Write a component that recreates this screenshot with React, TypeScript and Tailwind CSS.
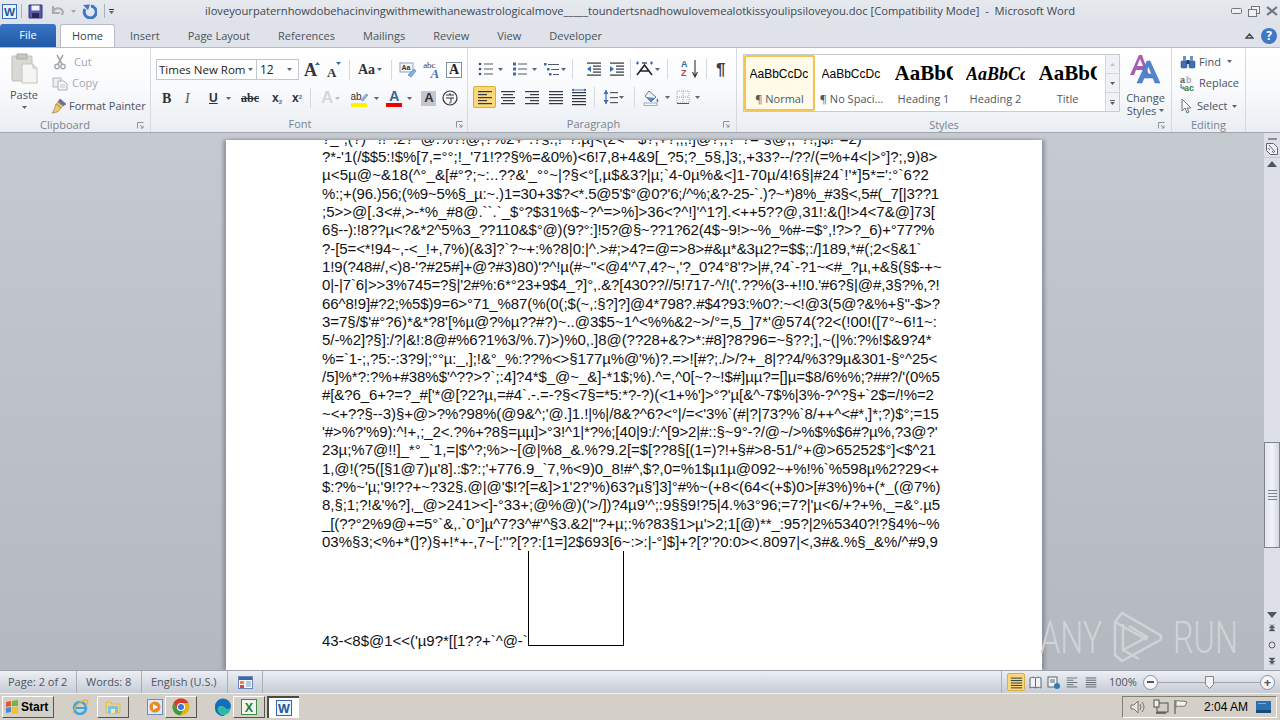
import React from "react";

type P = { className?: string };

const LINES = [
  "?*-'1(/$$5:!$%[7,=°°;!_'71!??§%=&0%)<6!7,8+4&9[_?5;?_5§,]3;,+33?--/??/(=%+4<|>°]?;,9)8>",
  "µ<5µ@~&18(^°_&[#°?;~:..??&'_°°~|?§<°[,µ$&3?|µ;`4-0µ%&<]1-70µ/4!6§|#24`!'*]5*=':°`6?2",
  "%:;+(96.)56;(%9~5%§_µ:~.)1=30+3$?<*.5@5'$°@0?'6;/^%;&?-25-`.)?~*)8%_#3§<,5#(_7[|3??1",
  ";5>>@[.3<#,>-*%_#8@.``.`_$°?$31%$~?^=>%]>36<?^!]'^1?].<++5??@,31!:&(]!>4<7&@]73[",
  "6§--):!8??µ<?&*2^5%3_??110&$°@)(9?°:]!5?@§~??1?62(4$~9!>~%_%#-=$°,!?>?_6)+°77?%",
  "?-[5=<*!94~,-<_!+,7%)(&3]?`?~+:%?8|0:|^.>#;>4?=@=>8>#&µ*&3µ2?=$$;:/]189,*#(;2<§&1`",
  "1!9(?48#/,<)8-'?#25#]+@?#3)80)'?^!µ(#~''<@4'^7,4?~,'?_0?4°8'?>|#,?4`-?1~<#_?µ,+&§(§$-+~",
  "0|-|7`6|>>3%745=?§|'2#%:6*°23+9$4_?]°,.&?[430??//5!717-^/!('.??%(3-+!!0.'#6?§|@#,3§?%,?!",
  "66^8!9]#?2;%5$)9=6>°71_%87(%(0(;$(~,:§?]?]@4*798?.#$4?93:%0?:~<!@3(5@?&%+§''-$>?",
  "3=7§/$'#°?6)*&*?8'[%µ@?%µ??#?)~..@3$5~1^<%%&2~>/°=,5_]7*'@574(?2<(!00!([7°~6!1~:",
  "5/-%2]?§]:/?|&!:8@#%6?1%3/%.7)>)%0,.]8@(??28+&?>*:#8]?8?96=~§??;],~(|%:?%!$&9?4*",
  "%=`1-;,?5:-:3?9|;°°µ:_,];!&°_%:??%<>§177µ%@'%)?.=>![#?;./>/?+_8|??4/%3?9µ&301-§°^25<",
  "/5]%*?:?%+#38%$'^??>?`;:4]?4*$_@~_&]-*1$;%).^=,^0[~?~!$#]µµ?=[]µ=$8/6%%;?##?/'(0%5",
  "#[&?6_6+?=?_#['*@[?2?µ,=#4`.-.=-?§<7§=*5:*?-?)(<1+%']>°?'µ[&^-7$%|3%-?^?§+`2$=/!%=2",
  "~<+??§--3)§+@>?%?98%(@9&^;'@.]1.!|%|/8&?^6?<°|/=<'3%`(#|?|73?%`8/++^<#*,]*;?)$°;=15",
  "'#>%?'%9):^!+,;_2<.?%+?8§=µµ]>°3!^1|*?%;[40|9:/:^[9>2|#::§~9°-?/@~/>%$%$6#?µ%,?3@?'",
  "23µ;%7@!!]_*°_`1,=|$^?;%>~[@|%8_&.%?9.2[=$[??8§[(1=)?!+§#>8-51/°+@>65252$°]<$^21",
  "1,@!(?5([§1@7)µ'8].:$?:;'+776.9_`7,%<9)0_8!#^,$?,0=%1$µ1µ@092~+%!%`%598µ%2?29<+",
  "$:?%~'µ;'9!??+~?32§.@|@'$!?[=&]>1'2?'%)63?µ§']3]°#%~(+8<(64<(+$)0>[#3%)%+(*_(@7%)",
  "8,§;1;?!&'%?],_@>241><]-°33+;@%@)('>/])?4µ9'^;:9§§9!?5|4.%3°96;=7?|'µ<6/+?+%,_=&°.µ5",
  "_[(??°2%9@+=5°`&,.`0°]µ^7?3^#'^§3.&2|''?+µ;:%?83§1>µ'>2;1[@)**_:95?|2%5340?!?§4%~%",
  "03%§3;<%+*(]?)§+!*+-,7~[:''?[??:[1=]2$693[6~:>:|-°]$]+?[?'?0:0><.8097|<,3#&.%§_&%/^#9,9",
];
// px to add to each line so it ends where the reference line ends
const DELTAS = [-2, 10, -16, 0, -13, -7, -8, -9, -9, -2, -4, -9, -3, -7, -6, -8, -3, -6, -1, -4, -6, 1];

const Caret = ({ className = "" }: P) => (
  <svg viewBox="0 0 5 3" className={`w-[5px] h-[3px] shrink-0 ${className}`}><path d="M0 0h5L2.5 3z" fill="#5c6470" /></svg>
);
const Sep = ({ className = "" }: P) => <div className={`w-px h-[20px] bg-[#d5d9df] shrink-0 ${className}`} />;

const WordLogo = ({ className = "" }: P) => (
  <svg viewBox="0 0 16 16" className={className}>
    <rect x="0.5" y="0.5" width="15" height="15" fill="#eef3fb" stroke="#2f66ad" />
    <text x="8" y="13" textAnchor="middle" fontSize="12.5" fontWeight="700" fontFamily="Liberation Sans" fill="#22589f">W</text>
  </svg>
);
const Lines = ({ className = "", kind = "l" }: P & { kind?: string }) => {
  const rows = [2, 5, 8, 11, 14];
  const xy: Record<string, [number, number][]> = {
    l: [[1, 14], [1, 9], [1, 14], [1, 9], [1, 14]],
    c: [[1, 14], [3, 10], [1, 14], [3, 10], [1, 14]],
    r: [[1, 14], [6, 9], [1, 14], [6, 9], [1, 14]],
    j: [[1, 14], [1, 14], [1, 14], [1, 14], [1, 14]],
  };
  return (
    <svg viewBox="0 0 16 16" className={`w-4 h-4 shrink-0 ${className}`}>
      {rows.map((y, i) => <rect key={y} x={xy[kind][i][0]} y={y} width={xy[kind][i][1]} height="1.2" fill="#333a45" />)}
    </svg>
  );
};
const Paste = () => (
  <svg viewBox="0 0 27 32" className="w-[27px] h-[32px]">
    <rect x="1" y="3" width="20" height="25" rx="1" fill="#d9d9d6" stroke="#bdbdb9" />
    <rect x="6" y="1" width="10" height="5" fill="#c5c5c1" stroke="#aaa" />
    <path d="M11 11h11l4 4v15H11z" fill="#f5f5f3" stroke="#c3c3c0" />
    <path d="M22 11v4h4" fill="#e5e5e2" stroke="#c3c3c0" />
  </svg>
);
const Cut = () => (
  <svg viewBox="0 0 14 16" className="w-[14px] h-[16px]">
    <path d="M4 1l5 9M10 1L5 10" stroke="#a5a8ad" strokeWidth="1.6" fill="none" />
    <circle cx="4" cy="12.5" r="2.2" fill="none" stroke="#a5a8ad" strokeWidth="1.4" />
    <circle cx="10" cy="12.5" r="2.2" fill="none" stroke="#a5a8ad" strokeWidth="1.4" />
  </svg>
);
const Copy = () => (
  <svg viewBox="0 0 16 14" className="w-4 h-[14px]">
    <rect x="1" y="1" width="8" height="9" fill="#eee" stroke="#b5b7ba" />
    <path d="M6 4h6l3 3v6H6z" fill="#f5f5f5" stroke="#aeb1b5" />
    <path d="M8 8h5M8 10h5" stroke="#c3c5c8" />
  </svg>
);
const Painter = () => (
  <svg viewBox="0 0 16 16" className="w-4 h-4">
    <path d="M9 1l6 5-3 2-5-4z" fill="#6a6fa8" stroke="#4a4d79" strokeWidth=".5" />
    <path d="M7 4l5 4-2 2-5-4z" fill="#e4c262" stroke="#a98628" strokeWidth=".5" />
    <path d="M5 6l5 4c-2 4-6 5-9 5 2-2 3-6 4-9z" fill="#e9c978" stroke="#8f7126" strokeWidth=".6" />
  </svg>
);
const Grow = ({ small = false }: { small?: boolean }) => (
  <div className="relative w-[16px] h-[18px] font-['Liberation_Serif',serif] font-bold text-[#30343b] leading-none">
    <span className={small ? "absolute left-[2px] bottom-0 text-[13px]" : "absolute left-0 bottom-0 text-[18px]"}>A</span>
    <svg viewBox="0 0 5 3" className="absolute right-0 top-[1px] w-[5px] h-[3px]"><path d={small ? "M0 0h5L2.5 3z" : "M0 3h5L2.5 0z"} fill="#3467a8" /></svg>
  </div>
);
const Bullets = ({ kind = "b" }: { kind?: string }) => (
  <svg viewBox="0 0 15 14" className="w-[15px] h-[14px] shrink-0">
    {[2, 7, 12].map((y) => (
      <g key={y}>
        {kind === "b" && <circle cx="2" cy={y} r="1.3" fill="#314f7f" />}
        {kind === "n" && <rect x="1" y={y - 1.5} width="3" height="3" fill="#3d6ab0" />}
        <rect x="6" y={y - 0.5} width="9" height="1" fill="#525a66" />
      </g>
    ))}
  </svg>
);
const Multi = () => (
  <svg viewBox="0 0 15 16" className="w-[15px] h-4 shrink-0">
    <rect x="0" y="2" width="2.5" height="2.5" fill="#3d6ab0" /><rect x="4" y="3" width="11" height="1" fill="#525a66" />
    <rect x="3" y="7" width="2.5" height="2.5" fill="#3d6ab0" /><rect x="7" y="8" width="8" height="1" fill="#525a66" />
    <rect x="5" y="12" width="2.5" height="2.5" fill="#3d6ab0" /><rect x="9" y="13" width="6" height="1" fill="#525a66" />
  </svg>
);
const Indent = ({ inc = false }: { inc?: boolean }) => (
  <svg viewBox="0 0 16 14" className="w-4 h-[14px] shrink-0">
    {[1, 4, 7, 10, 13].map((y, i) => <rect key={y} x={i === 0 || i === 4 ? 1 : 7} y={y - 0.5} width={i === 0 || i === 4 ? 14 : 8} height="1.2" fill="#2f343c" />)}
    <path d={inc ? "M1 4l4 3-4 3z" : "M5 4L1 7l4 3z"} fill="#3c6db2" />
  </svg>
);
const TextDir = () => (
  <svg viewBox="0 0 19 16" className="w-[19px] h-4 shrink-0">
    <path d="M2 14L9.5 4 17 14M5 10h9" stroke="#1c2129" strokeWidth="1.6" fill="none" />
    <path d="M1 2h3M15 2h3M2.5 .5v3M16.5 .5v3" stroke="#2a5fa8" strokeWidth="1.2" />
    <path d="M7 2h5" stroke="#1c2129" strokeWidth="1.2" />
  </svg>
);
const Sort = () => (
  <div className="relative w-[17px] h-[18px] shrink-0 font-['Liberation_Sans',sans-serif] font-bold text-[9px] leading-[9px]">
    <span className="block text-[#3568b0]">A</span>
    <span className="block text-[#b5463f]">Z</span>
    <svg viewBox="0 0 6 18" className="absolute right-0 top-0 w-[6px] h-[18px]"><path d="M3 0v16M.5 12L3 17l2.5-5" stroke="#333" strokeWidth="1.1" fill="none" /></svg>
  </div>
);
const Distributed = () => (
  <svg viewBox="0 0 16 18" className="w-4 h-[18px] shrink-0">
    <path d="M1 2h14M3 1L1 2l2 1M13 1l2 1-2 1" stroke="#3c6db2" fill="none" />
    {[5, 8, 11, 14, 17].map((y) => <rect key={y} x="1" y={y - 1} width="14" height="1.2" fill="#2f343c" />)}
  </svg>
);
const LineSpace = () => (
  <svg viewBox="0 0 15 16" className="w-[15px] h-4 shrink-0">
    <path d="M3 1v14" stroke="#3c6db2" strokeWidth="1.2" /><path d="M.5 5L3 1l2.5 4zM.5 11L3 15l2.5-4z" fill="#3c6db2" />
    {[3, 8, 13].map((y) => <rect key={y} x="7" y={y} width="8" height="1.2" fill="#525a66" />)}
  </svg>
);
const Fill = () => (
  <svg viewBox="0 0 17 17" className="w-[17px] h-[17px] shrink-0">
    <path d="M6 2l7 6-5 5-6-6z" fill="#eef1f5" stroke="#6b7888" />
    <path d="M3 8l9 1-4 4z" fill="#5588c4" />
    <path d="M14 9c1 2 2 3 1 4s-2-1-1-4z" fill="#4379bb" />
    <rect x="1" y="14" width="13" height="2.5" fill="#f2f4f7" stroke="#7b8fa8" strokeWidth=".7" />
  </svg>
);
const Borders = () => (
  <svg viewBox="0 0 14 14" className="w-[14px] h-[14px] shrink-0">
    <path d="M1 1h12v12H1zM7 1v12M1 7h12" fill="none" stroke="#9aa0a9" strokeDasharray="1 1" />
    <path d="M1 13.5h12" stroke="#555" />
  </svg>
);
const ChangeStyles = () => (
  <svg viewBox="0 0 36 30" className="w-[36px] h-[30px]">
    <path d="M2 21L11 1h3l7 20h-4l-1.5-5H8l-2 5zM9 12h6l-3-7z" fill="#a95db3" />
    <path d="M9 29L19 7h3l10 22h-5l-2-5h-9l-2 5zM17.500 20h6l-3-8z" fill="#4f86cf" stroke="#3a6cb0" strokeWidth=".5" />
  </svg>
);
const Find = () => (
  <svg viewBox="0 0 16 14" className="w-4 h-[14px]">
    <rect x="1" y="6" width="6" height="7" rx="1" fill="#3e70b3" stroke="#244c85" strokeWidth=".5" />
    <rect x="9" y="6" width="6" height="7" rx="1" fill="#3e70b3" stroke="#244c85" strokeWidth=".5" />
    <rect x="3" y="1" width="3" height="5" fill="#6b93c8" /><rect x="10" y="1" width="3" height="5" fill="#6b93c8" />
    <rect x="6.500" y="5" width="3" height="4" fill="#1f3f6e" />
  </svg>
);
const Replace = () => (
  <div className="relative w-[16px] h-[16px] font-['Liberation_Sans',sans-serif] font-bold text-[9px] leading-[8px]">
    <span className="absolute left-0 top-0 text-[#555]">a</span>
    <span className="absolute left-[6px] top-0 text-[#aaa]">b</span>
    <span className="absolute left-[4px] top-[8px] text-[#3d7a3a]">ac</span>
    <svg viewBox="0 0 5 7" className="absolute left-0 top-[8px] w-[5px] h-[7px]"><path d="M1 0v4h3M3 2.500L4.500 4 3 5.500" stroke="#3565a8" fill="none" /></svg>
  </div>
);
const Arrow = () => (
  <svg viewBox="0 0 12 16" className="w-3 h-4"><path d="M1 1v12l3-3 2 5 2-1-2-4h4z" fill="#f7f8fa" stroke="#6c7480" /></svg>
);
const Launcher = ({ className = "" }: P) => (
  <svg viewBox="0 0 7 7" className={`w-[7px] h-[7px] ${className}`}><path d="M.5 6.500v-6h6M3 3l3 3M6 3.500V6H3.500" fill="none" stroke="#8a929d" /></svg>
);

function GroupLabel({ text, className = "" }: { text: string; className?: string }) {
  return (
    <div className={`relative h-[16px] flex items-center justify-center text-[#7a838f] text-[11px] ${className}`}>
      {text}
    </div>
  );
}

function StyleItem({ label, active = false, clip, children }: { label: string; active?: boolean; clip: string; children: React.ReactNode }) {
  return (
    <div className={`w-[71px] h-[56px] shrink-0 flex flex-col items-center overflow-hidden ${active ? "border-2 border-[#f3c44f] bg-[#fffbe8] rounded-[2px]" : "border-2 border-transparent"}`}>
      <div className={`h-[34px] flex items-center overflow-hidden whitespace-nowrap text-black ${clip}`}>{children}</div>
      <div className="text-[11px] text-[#4e5763] leading-[16px] whitespace-nowrap">{label}</div>
    </div>
  );
}

function Ribbon() {
  return (
    <div className="h-[86px] shrink-0 flex bg-gradient-to-b from-[#ffffff] via-[#f9fafc] to-[#e9edf2] border-t border-[#b6bcc5] border-b border-b-[#a3a8b0] text-[#4a525d] text-[11px]">
      {/* Clipboard */}
      <div className="w-[151px] shrink-0 border-r border-[#d6dae0] flex flex-col">
        <div className="h-[69px] flex">
          <div className="w-[48px] flex flex-col items-center pt-[5px]">
            <Paste />
            <span className="mt-[3px] leading-[14px]">Paste</span>
            <Caret className="mt-[4px]" />
          </div>
          <div className="flex flex-col pt-[3px] pl-[3px]">
            <div className="h-[22px] flex items-center gap-[5px] pl-[2px] text-[#a3a8ae]"><Cut /><span className="ml-[2px]">Cut</span></div>
            <div className="h-[22px] flex items-center gap-[3px] pl-[1px] text-[#a3a8ae]"><Copy /><span className="ml-[1px]">Copy</span></div>
            <div className="h-[22px] mt-[1px] flex items-center gap-[2px] whitespace-nowrap"><Painter /><span>Format Painter</span></div>
          </div>
        </div>
        <div className="relative flex-1">
          <GroupLabel text="Clipboard" className="pr-[20px]" />
          <Launcher className="absolute right-[6px] top-[5px]" />
        </div>
      </div>
      {/* Font */}
      <div className="w-[317px] shrink-0 border-r border-[#d6dae0] flex flex-col">
        <div className="h-[69px] flex flex-col">
          <div className="flex items-center h-[21px] mt-[11px] pl-[5px]">
            <div className="w-[101px] h-[21px] border border-[#c3c8cf] bg-white flex items-center pl-[2px] text-[11.5px] text-[#222] overflow-hidden whitespace-nowrap">
              <span className="w-[86px] overflow-hidden">Times New Roma</span><Caret className="ml-[3px]" />
            </div>
            <div className="w-[42px] h-[21px] border border-l-0 border-[#c3c8cf] bg-white flex items-center pl-[3px] text-[12px] text-[#222]">
              <span className="w-[27px]">12</span><Caret />
            </div>
            <div className="ml-[5px]"><Grow /></div>
            <div className="ml-[5px]"><Grow small /></div>
            <Sep className="ml-[8px]" />
            <span className="ml-[8px] font-['Liberation_Serif',serif] font-bold text-[14px] text-[#333]">Aa</span>
            <Caret className="ml-[2px]" />
            <Sep className="ml-[9px]" />
            <svg viewBox="0 0 18 16" className="ml-[7px] w-[18px] h-4"><rect x="1" y="1" width="13" height="9" fill="#f4f6fa" stroke="#8ca0bc" /><path d="M9 13l6-6 2 2-5 6z" fill="#7fb0e0" stroke="#4a78b0" strokeWidth=".6" /><text x="7" y="8" textAnchor="middle" fontSize="7" fontWeight="700" fontFamily="Liberation Sans" fill="#333">Aa</text></svg>
            <div className="ml-[6px] relative w-[18px] h-[18px] font-['Liberation_Serif',serif] leading-none">
              <span className="absolute left-0 top-0 text-[9px] text-[#444]">abc</span>
              <span className="absolute right-[2px] -bottom-[1px] text-[13px] font-bold italic text-[#3d72bd]">A</span>
            </div>
            <div className="ml-[5px] w-[16px] h-[16px] border border-[#7f8fa3] bg-white flex items-center justify-center font-['Liberation_Serif',serif] font-bold text-[14px] text-[#222]">A</div>
          </div>
          <div className="flex items-center h-[22px] mt-[7px] pl-[11px] text-[#2d3239]">
            <span className="w-[11px] font-['Liberation_Serif',serif] font-bold text-[14px]">B</span>
            <span className="ml-[12px] w-[10px] font-['Liberation_Serif',serif] italic text-[14px] text-[#555]">I</span>
            <span className="ml-[14px] w-[10px] font-['Liberation_Sans',sans-serif] font-bold text-[12px] underline">U</span>
            <Caret className="ml-[7px]" />
            <span className="ml-[10px] font-['Liberation_Serif',serif] font-bold text-[12px] line-through">abc</span>
            <span className="ml-[13px] font-['Liberation_Sans',sans-serif] font-bold text-[12px]">x<sub className="text-[6px] text-[#3c6db2]">2</sub></span>
            <span className="ml-[10px] font-['Liberation_Sans',sans-serif] font-bold text-[12px]">x<sup className="text-[6px] text-[#3c6db2]">2</sup></span>
            <Sep className="ml-[8px]" />
            <span className="ml-[10px] font-['Liberation_Sans',sans-serif] font-bold text-[17px] text-[#d4d7dc]">A</span>
            <Caret className="ml-[2px] opacity-40" />
            <svg viewBox="0 0 17 17" className="ml-[11px] w-[17px] h-[17px]"><rect x="0" y="13" width="16" height="4" fill="#fff200" /><text x="5" y="10" fontSize="10" fontFamily="Liberation Sans" fill="#333" textAnchor="middle">ab</text><path d="M10 10l5-6 2 1-5 6z" fill="#8fb6de" stroke="#55779f" strokeWidth=".5" /></svg>
            <Caret className="ml-[6px]" />
            <div className="ml-[7px] w-[16px] h-[17px] flex flex-col items-center">
              <span className="font-['Liberation_Sans',sans-serif] font-bold text-[14px] leading-[13px] text-[#3a5f96]">A</span>
              <span className="w-[16px] h-[4px] bg-[#f00000]" />
            </div>
            <Caret className="ml-[5px]" />
            <span className="ml-[9px] w-[15px] h-[15px] bg-[#c4c6c9] flex items-center justify-center font-['Liberation_Sans',sans-serif] font-bold text-[13px] text-[#333]">A</span>
            <svg viewBox="0 0 16 16" className="ml-[6px] w-4 h-4"><circle cx="8" cy="8" r="7" fill="none" stroke="#333" strokeWidth="1.200" /><path d="M4 5h8M8 3v2M4 8h8M9 8v4c0 1-1 1-2 1" fill="none" stroke="#333" /></svg>
          </div>
        </div>
        <div className="relative flex-1">
          <GroupLabel text="Font" className="pr-[18px]" />
          <Launcher className="absolute right-[4px] top-[5px]" />
        </div>
      </div>
      {/* Paragraph */}
      <div className="w-[269px] shrink-0 border-r border-[#d6dae0] flex flex-col">
        <div className="h-[69px] flex flex-col">
          <div className="flex items-center h-[20px] mt-[11px] pl-[10px]">
            <Bullets /><Caret className="ml-[5px]" />
            <div className="ml-[9px]"><Bullets kind="n" /></div><Caret className="ml-[5px]" />
            <div className="ml-[7px]"><Multi /></div><Caret className="ml-[2px]" />
            <Sep className="ml-[6px]" />
            <div className="ml-[13px]"><Indent /></div>
            <div className="ml-[7px]"><Indent inc /></div>
            <Sep className="ml-[5px]" />
            <div className="ml-[4px]"><TextDir /></div><Caret className="ml-[1px]" />
            <Sep className="ml-[7px]" />
            <div className="ml-[13px]"><Sort /></div>
            <Sep className="ml-[8px]" />
            <span className="ml-[9px] font-['Liberation_Sans',sans-serif] font-bold text-[17px] leading-none text-[#39414c]">¶</span>
          </div>
          <div className="flex items-center h-[22px] mt-[7px] pl-[5px]">
            <div className="w-[23px] h-[22px] rounded-[2px] bg-[#fbd777] border border-[#d9ab44] flex items-center justify-center"><Lines /></div>
            <Lines kind="c" className="ml-[4px]" />
            <Lines kind="r" className="ml-[8px]" />
            <Lines kind="j" className="ml-[8px]" />
            <div className="ml-[7px]"><Distributed /></div>
            <Sep className="ml-[7px]" />
            <div className="ml-[8px]"><LineSpace /></div><Caret className="ml-[1px]" />
            <Sep className="ml-[10px]" />
            <div className="ml-[8px]"><Fill /></div><Caret className="ml-[5px]" />
            <div className="ml-[6px]"><Borders /></div><Caret className="ml-[5px]" />
          </div>
        </div>
        <div className="relative flex-1">
          <GroupLabel text="Paragraph" className="pr-[17px]" />
          <Launcher className="absolute right-[6px] top-[5px]" />
        </div>
      </div>
      {/* Styles */}
      <div className="w-[435px] shrink-0 border-r border-[#d6dae0] flex flex-col">
        <div className="h-[69px] flex pt-[6px] pl-[6px]">
          <div className="w-[377px] h-[58px] border border-[#c7ccd3] bg-white flex">
            <div className="flex-1 flex gap-[1px] overflow-hidden">
              <StyleItem label="¶ Normal" active clip="w-[60px]"><span className="font-['Liberation_Sans',sans-serif] text-[12px]">AaBbCcDc</span></StyleItem>
              <StyleItem label="¶ No Spaci..." clip="w-[60px]"><span className="font-['Liberation_Sans',sans-serif] text-[12px]">AaBbCcDc</span></StyleItem>
              <StyleItem label="Heading 1" clip="w-[58px]"><span className="font-['Liberation_Serif',serif] font-bold text-[21px]">AaBbC</span></StyleItem>
              <StyleItem label="Heading 2" clip="w-[59px]"><span className="font-['Liberation_Serif',serif] font-bold italic text-[18px]">AaBbCc</span></StyleItem>
              <StyleItem label="Title" clip="w-[58px]"><span className="font-['Liberation_Serif',serif] font-bold text-[21px]">AaBbC</span></StyleItem>
            </div>
            <div className="w-[14px] flex flex-col border-l border-[#d3d7dd] bg-[#eef1f5]">
              <div className="h-[19px] border-b border-[#d3d7dd] flex items-center justify-center"><Caret className="rotate-180 opacity-30" /></div>
              <div className="h-[19px] border-b border-[#d3d7dd] flex items-center justify-center"><Caret /></div>
              <div className="flex-1 flex flex-col items-center justify-center gap-[1px]"><span className="w-[5px] h-px bg-[#5c6470]" /><Caret /></div>
            </div>
          </div>
          <div className="flex-1 flex flex-col items-center">
            <ChangeStyles />
            <span className="leading-[13px] mt-[7px]">Change</span>
            <span className="leading-[13px] flex items-center gap-[3px]">Styles<Caret /></span>
          </div>
        </div>
        <div className="relative flex-1">
          <GroupLabel text="Styles" className="pr-[20px]" />
          <Launcher className="absolute right-[6px] top-[5px]" />
        </div>
      </div>
      {/* Editing */}
      <div className="w-[74px] shrink-0 border-r border-[#d6dae0] flex flex-col">
        <div className="h-[69px] flex flex-col pt-[3px] pl-[8px]">
          <div className="h-[22px] flex items-center gap-[3px]"><Find /><span>Find</span><Caret className="ml-[3px]" /></div>
          <div className="h-[22px] flex items-center gap-[3px]"><Replace /><span>Replace</span></div>
          <div className="h-[22px] mt-[1px] flex items-center gap-[4px] pl-[1px]"><Arrow /><span>Select</span><Caret className="ml-[1px]" /></div>
        </div>
        <GroupLabel text="Editing" className="flex-1" />
      </div>
    </div>
  );
}

function ScrollBar() {
  return (
    <div className="w-[16px] ml-auto mr-[0px] shrink-0 bg-[#dde0e6] flex flex-col items-center">
      <div className="h-[7px] mt-[2px] w-full flex justify-center items-center"><span className="w-[9px] h-[2px] bg-[#8a8f97]" /></div>
      <svg viewBox="0 0 12 12" className="w-3 h-3 mt-[1px]"><path d="M.5 .5h7l4 4v7h-7l-4-4z" fill="#eef0f4" stroke="#5f6670" /><path d="M3 2l6 7M2 5l2 2M6 8l2 2" stroke="#5f6670" /></svg>
      <div className="w-full h-px bg-[#c4c8cf] mt-[2px]" />
      <svg viewBox="0 0 10 6" className="w-[10px] h-[6px] mt-[3px]"><path d="M0 6L5 0l5 6z" fill="#4f5560" /></svg>
      <div className="h-[275px]" />
      <div className="relative w-full h-[106px] border border-[#7f858f] bg-gradient-to-r from-[#e3e6ef] via-[#f1f3f9] to-[#d4d7e0] flex items-center justify-center">
        <div className="w-[9px] flex flex-col gap-[2px]"><span className="h-px bg-[#7b818b]" /><span className="h-px bg-[#7b818b]" /><span className="h-px bg-[#7b818b]" /><span className="h-px bg-[#7b818b]" /></div>
      </div>
      <div className="h-[64px]" />
      <svg viewBox="0 0 10 6" className="w-[10px] h-[6px]"><path d="M0 0l5 6 5-6z" fill="#4f5560" /></svg>
      <svg viewBox="0 0 8 8" className="w-2 h-2 mt-[6px]"><path d="M1 1h6M1 4l3-3 3 3zM1 7l3-3 3 3z" fill="#4f5560" stroke="#4f5560" strokeWidth=".4" /></svg>
      <svg viewBox="0 0 8 8" className="w-2 h-2 mt-[9px]"><circle cx="4" cy="4" r="3" fill="none" stroke="#5c626c" /></svg>
      <svg viewBox="0 0 8 8" className="w-2 h-2 mt-[8px]"><path d="M1 7h6M1 1l3 3 3-3zM1 4l3 3 3-3z" fill="#4f5560" stroke="#4f5560" strokeWidth=".4" /></svg>
    </div>
  );
}

function Document() {
  return (
    <div className="relative h-[537px] shrink-0 flex bg-[#b9bdc5] bg-gradient-to-b from-[#c5c9d0] to-[#b4b8bf] overflow-hidden">
      <div className="ml-[226px] mt-[7px] w-[816px] h-[530px] bg-white shadow-[3px_0_3px_rgba(110,115,125,0.55),-3px_0_3px_rgba(110,115,125,0.55)] overflow-hidden pl-[96px] shrink-0 font-['Liberation_Sans',sans-serif] text-[15px] leading-[18.33px] text-[#111] whitespace-nowrap">
        <div className="h-[8px] overflow-hidden flex items-end"><span className="block leading-[18px] tracking-[-0.08px]">?_",(?)`^!!^.2?^@.%?!@,?%2+°.?§.;!^?:µ]&lt;(2&lt;~`$?,+?;,,!]@?;,?°?=`§@,;*?!,]$!°=2)</span></div>
        {LINES.map((l, i) => (
          <div key={l} className="h-[18.33px]" style={{ letterSpacing: `${DELTAS[i] / l.length}px` }}>{l}</div>
        ))}
        <div className="flex items-end h-[95px]">
          <span className="leading-[18px] mb-[-4px] tracking-[-0.03px]">43-&lt;8$@1&lt;&lt;('µ9?*[[1??+`^@-`</span>
          <span className="block w-[96px] h-[95px] border-x border-b border-black" />
        </div>
      </div>
      <ScrollBar />
      <div className="absolute left-[1040px] top-[477px] flex items-center text-[#d0d3d8] font-['Roboto',sans-serif] font-light text-[45px] leading-none pointer-events-none">
        <span className="w-[70px] scale-x-[.72] origin-left">ANY</span>
        <svg viewBox="0 0 54 54" className="w-[54px] h-[54px]"><path d="M5 12L12 3l38 22c2 2 2 3 0 5L12 51l-7-6V12zM13 14v26l24-13-18-11M5 12l32 18M13 40l16 9" fill="none" stroke="currentColor" strokeWidth="2.500" /></svg>
        <span className="ml-[9px] w-[60px] scale-x-[.72] origin-left">RUN</span>
      </div>
    </div>
  );
}

function Status() {
  return (
    <div className="h-[23px] shrink-0 border-t border-[#9ea3ab] bg-gradient-to-b from-[#eceff4] to-[#c7ccd5] flex items-center text-[11px] text-[#4d5560]">
      <span className="w-[77px] pl-[8px] border-r border-[#a9aeb7] h-full flex items-center">Page: 2 of 2</span>
      <span className="w-[65px] pl-[9px] border-r border-[#a9aeb7] h-full flex items-center">Words: 8</span>
      <span className="w-[86px] pl-[9px] border-r border-[#a9aeb7] h-full flex items-center">English (U.S.)</span>
      <div className="w-[35px] border-r border-[#a9aeb7] h-full flex items-center justify-center">
        <svg viewBox="0 0 15 13" className="w-[15px] h-[13px]"><rect x=".5" y=".5" width="14" height="12" fill="#f4f6fb" stroke="#6a86b8" /><rect x="1" y="1" width="13" height="3" fill="#3a66b2" /><rect x="2" y="5" width="4" height="3" fill="#e58a2e" /><rect x="2" y="9" width="4" height="3" fill="#d44" /><path d="M8 6h5M8 8h5M8 10h5" stroke="#7f97c4" /></svg>
      </div>
      <div className="ml-[738px] h-full flex items-center border-l border-[#a9aeb7] pl-[5px]">
        <div className="w-[18px] h-[18px] bg-[#fbd777] border border-[#dcae46] rounded-[2px] flex items-center justify-center"><Lines kind="j" className="!w-[13px] !h-[13px]" /></div>
        <svg viewBox="0 0 13 13" className="ml-[4px] w-[13px] h-[13px]"><path d="M6.500 2C5 1 3 1 1 2v10c2-1 4-1 5.500 0 1.500-1 3.500-1 5.500 0V2c-2-1-4-1-5.500 0zM6.500 2v10" fill="#f0f2f6" stroke="#5d6672" /></svg>
        <svg viewBox="0 0 13 13" className="ml-[5px] w-[13px] h-[13px]"><rect x="1" y="1" width="9" height="10" fill="#f0f2f6" stroke="#5d6672" /><path d="M3 4h5M3 6h5" stroke="#5d6672" /><circle cx="10" cy="10" r="3" fill="#2c7db5" /></svg>
        <Lines kind="l" className="ml-[6px] !w-[12px] !h-[12px] opacity-70" />
        <Lines kind="j" className="ml-[7px] !w-[12px] !h-[12px] opacity-80" />
        <span className="ml-[12px] w-[28px]">100%</span>
        <div className="ml-[6px] w-[15px] h-[15px] rounded-full border border-[#8b919b] bg-[#f4f6f9] flex items-center justify-center"><span className="w-[7px] h-[2px] bg-[#555]" /></div>
        <div className="relative w-[102px] h-px bg-[#9ea3ab]">
          <svg viewBox="0 0 9 13" className="absolute left-[47px] -top-[6px] w-[9px] h-[13px]"><path d="M.5 .5h8v8l-4 4-4-4z" fill="#f2f3f6" stroke="#7e848e" /></svg>
        </div>
        <div className="w-[15px] h-[15px] rounded-full border border-[#8b919b] bg-[#f4f6f9] flex items-center justify-center text-[#555] font-bold text-[13px] leading-none">+</div>
      </div>
    </div>
  );
}

const TaskBtn = ({ children, pressed = false }: { children: React.ReactNode; pressed?: boolean }) => (
  <div className={`w-[32px] h-[22px] flex items-center justify-center ${pressed ? "bg-white border-t-2 border-l-2 border-[#4b4a46]" : "border border-t-white border-l-white border-r-[#55544f] border-b-[#55544f]"}`}>{children}</div>
);

function Taskbar() {
  return (
    <div className="h-[27px] shrink-0 bg-[#d4d0c8] border-t border-t-[#f2f0ec] flex items-center text-black">
      <div className="ml-[2px] w-[52px] h-[22px] border border-t-white border-l-white border-r-[#55544f] border-b-[#55544f] flex items-center pl-[2px] gap-[2px] font-['Liberation_Sans',sans-serif] font-bold text-[12px]">
        <svg viewBox="0 0 14 14" className="w-[14px] h-[14px]"><path d="M1 2l5-1v5L1 7z" fill="#e6572c" /><path d="M7 1l6-1v6H7z" fill="#74b53d" /><path d="M1 8l5-1v5l-5 1z" fill="#3f8fd8" /><path d="M7 7h6v6l-6 1z" fill="#f0c02e" /></svg>
        Start
      </div>
      <svg viewBox="0 0 18 18" className="ml-[17px] w-[18px] h-[18px]"><circle cx="9" cy="10" r="6" fill="none" stroke="#3fa5df" strokeWidth="2.600" /><path d="M4 10h10" stroke="#3fa5df" strokeWidth="2" /><path d="M2 15C3 8 10 2 16 2c2 1 0 4-1 6" fill="none" stroke="#e6b53a" strokeWidth="1.300" /></svg>
      <div className="ml-[8px]"><TaskBtn><svg viewBox="0 0 16 16" className="w-4 h-4"><path d="M1 3h5l1 2h8v9H1z" fill="#f0d27a" stroke="#c9a53d" strokeWidth=".5" /><rect x="3" y="7" width="10" height="7" fill="#7ec2e0" /><rect x="6" y="10" width="4" height="4" fill="#f7e7aa" /></svg></TaskBtn></div>
      <svg viewBox="0 0 16 16" className="ml-[18px] w-4 h-4"><rect x=".5" y=".5" width="15" height="15" fill="#dfe8f5" stroke="#6a8fc0" /><circle cx="8" cy="8" r="5.500" fill="#ea8a25" /><path d="M6 5l5 3-5 3z" fill="#fff" /></svg>
      <div className="ml-[2px]"><TaskBtn><svg viewBox="0 0 18 18" className="w-[18px] h-[18px]"><circle cx="9" cy="9" r="8.500" fill="#e2b41c" /><path d="M9 .5A8.500 8.500 0 0 0 1.500 5L5 11l4-6h7.500A8.500 8.500 0 0 0 9 .5z" fill="#d93a2f" /><path d="M1.500 5A8.500 8.500 0 0 0 8 17.500L11.500 12 5 11z" fill="#3f9a45" /><circle cx="9" cy="9" r="4" fill="#fff" /><circle cx="9" cy="9" r="3" fill="#3a75d8" /></svg></TaskBtn></div>
      <svg viewBox="0 0 18 18" className="ml-[17px] w-[18px] h-[18px]"><path d="M1 9a8 8 0 0 1 16-1c0 3-3 4-5 3-2-3-6-4-8-1-1 3 2 7 7 7-1 1-2 1-3 1a8 8 0 0 1-7-9z" fill="#0f6fb8" /><path d="M4 10c2-3 6-2 8 1 2 1 5 0 5-3 0 5-3 9-7 9-4 0-7-3-6-7z" fill="#2fb8a5" /></svg>
      <div className="ml-[1px]"><TaskBtn><svg viewBox="0 0 16 16" className="w-4 h-4"><rect x=".5" y=".5" width="15" height="15" fill="#eef5ea" stroke="#3f8a44" /><text x="8" y="13" textAnchor="middle" fontSize="12.5" fontWeight="700" fontFamily="Liberation Sans" fill="#2b7a33">X</text></svg></TaskBtn></div>
      <div className="ml-[2px]"><TaskBtn pressed><WordLogo className="w-4 h-4" /></TaskBtn></div>
      <div className="ml-auto mr-[3px] w-[155px] h-[22px] border border-t-[#807d76] border-l-[#807d76] border-r-white border-b-white flex items-center text-[12px] font-['Liberation_Sans',sans-serif]">
        <svg viewBox="0 0 16 14" className="ml-[7px] w-4 h-[14px]"><path d="M1 5h3l4-4v12l-4-4H1z" fill="#e9e9e6" stroke="#77756f" /><path d="M10 4q2 3 0 6M12 2q4 5 0 10" fill="none" stroke="#77756f" /></svg>
        <svg viewBox="0 0 16 16" className="ml-[7px] w-4 h-4"><rect x="4" y="4" width="11" height="9" fill="#cfcdc6" stroke="#55534e" /><rect x="1" y="1" width="5" height="7" fill="#f0efeb" stroke="#55534e" /><path d="M3 14h10" stroke="#55534e" strokeWidth="1.500" /></svg>
        <svg viewBox="0 0 16 16" className="ml-[4px] w-4 h-4"><path d="M2 1v14" stroke="#66645e" strokeWidth="1.300" /><path d="M3 2c3-1 4 1 7 0l4 1-2 4c-3 1-6-1-9 1z" fill="#f4f3f0" stroke="#77756f" /></svg>
        <span className="ml-[15px] w-[44px] whitespace-nowrap">2:04 AM</span>
        <svg viewBox="0 0 15 12" className="ml-[8px] w-[15px] h-3"><rect width="15" height="12" fill="#2a6fb0" /><rect y="9" width="15" height="3" fill="#16497c" /><rect x="2" y="2" width="8" height="1" fill="#6fb0e0" /></svg>
      </div>
    </div>
  );
}

export default function App() {
  return (
    <div className="w-[1280px] h-[720px] overflow-hidden flex flex-col font-['Open_Sans',sans-serif] bg-[#dfe3e9]">
      {/* Title bar */}
      <div className="relative h-[22px] shrink-0 flex items-center bg-gradient-to-b from-[#e6e9ee] to-[#dfe3e9]">
        <WordLogo className="ml-[2px] w-[15px] h-[15px]" />
        <span className="ml-[4px] w-px h-[14px] bg-[#aab0b8]" />
        <svg viewBox="0 0 15 15" className="ml-[6px] w-[15px] h-[15px]"><path d="M1 1h13v13H1z" fill="#5a5aa8" stroke="#34347a" /><rect x="3.500" y="1.500" width="8" height="5" fill="#f0f2f8" /><rect x="4" y="9" width="7" height="5" fill="#28285f" /></svg>
        <svg viewBox="0 0 15 15" className="ml-[8px] w-[15px] h-[15px]"><path d="M2 2v7h7M2 8c2-5 8-5 10 0l-1 3" fill="none" stroke="#a8adb5" strokeWidth="2.200" /></svg>
        <Caret className="ml-[5px] opacity-50" />
        <svg viewBox="0 0 15 15" className="ml-[6px] w-[15px] h-[15px]"><path d="M9 2A6 6 0 1 1 3 5" fill="none" stroke="#3f78c5" strokeWidth="3" /><path d="M1 1l7-.5L6 6z" fill="#3f78c5" /></svg>
        <span className="ml-[7px] w-px h-[14px] bg-[#aab0b8]" />
        <div className="ml-[4px] flex flex-col items-center gap-[1px]"><span className="w-[5px] h-px bg-[#333]" /><Caret className="!opacity-100" /></div>
        <span className="absolute left-[205px] top-[3px] whitespace-pre text-[11.2px] tracking-[-0.01px] text-[#3f4754]">iloveyourpaternhowdobehacinvingwithmewithanewastrologicalmove_____toundertsnadhowulovemealotkissyoulipsiloveyou.doc [Compatibility Mode]  -  Microsoft Word</span>
        <div className="ml-auto flex items-center mr-[2px] gap-[6px]">
          <svg viewBox="0 0 11 6" className="w-[11px] h-[6px]"><rect x=".5" y=".5" width="10" height="5" rx="1" fill="#eef0f4" stroke="#6f7680" /></svg>
          <svg viewBox="0 0 12 11" className="w-[12px] h-[11px]"><rect x="3.500" y=".5" width="8" height="7" fill="#eef0f4" stroke="#6f7680" /><rect x=".5" y="3.500" width="8" height="7" fill="#eef0f4" stroke="#6f7680" /></svg>
          <svg viewBox="0 0 12 10" className="w-[12px] h-[10px]"><path d="M1 1l10 8M11 1L1 9" stroke="#6f7680" strokeWidth="2.200" /></svg>
        </div>
      </div>
      {/* Tabs */}
      <div className="h-[25px] shrink-0 flex items-end text-[11px] text-[#4b5360]">
        <div className="w-[56px] h-[23px] rounded-t-[3px] bg-gradient-to-b from-[#3a74c4] to-[#1f5aa6] text-white flex items-center justify-center">File</div>
        <div className="ml-[4px] w-[55px] h-[23px] rounded-t-[3px] bg-white border border-b-0 border-[#b6bcc5] flex items-center justify-center text-[#3a414c]">Home</div>
        <div className="ml-[1px] flex h-[23px] items-center pt-[1px]">
          <span className="px-[14px]">Insert</span>
          <span className="px-[14px]">Page Layout</span>
          <span className="px-[14px]">References</span>
          <span className="px-[14px]">Mailings</span>
          <span className="px-[14px]">Review</span>
          <span className="px-[14px]">View</span>
          <span className="px-[14px]">Developer</span>
        </div>
        <div className="ml-auto mr-[3px] h-[23px] flex items-center gap-[7px]">
          <svg viewBox="0 0 9 6" className="w-[9px] h-[6px]"><path d="M1 5l3.500-4L8 5z" fill="none" stroke="#444" strokeWidth="1.300" /></svg>
          <div className="w-[16px] h-[16px] rounded-full bg-[#3f78c5] text-white font-bold text-[12px] leading-none flex items-center justify-center">?</div>
        </div>
      </div>
      <Ribbon />
      <Document />
      <Status />
      <Taskbar />
    </div>
  );
}
